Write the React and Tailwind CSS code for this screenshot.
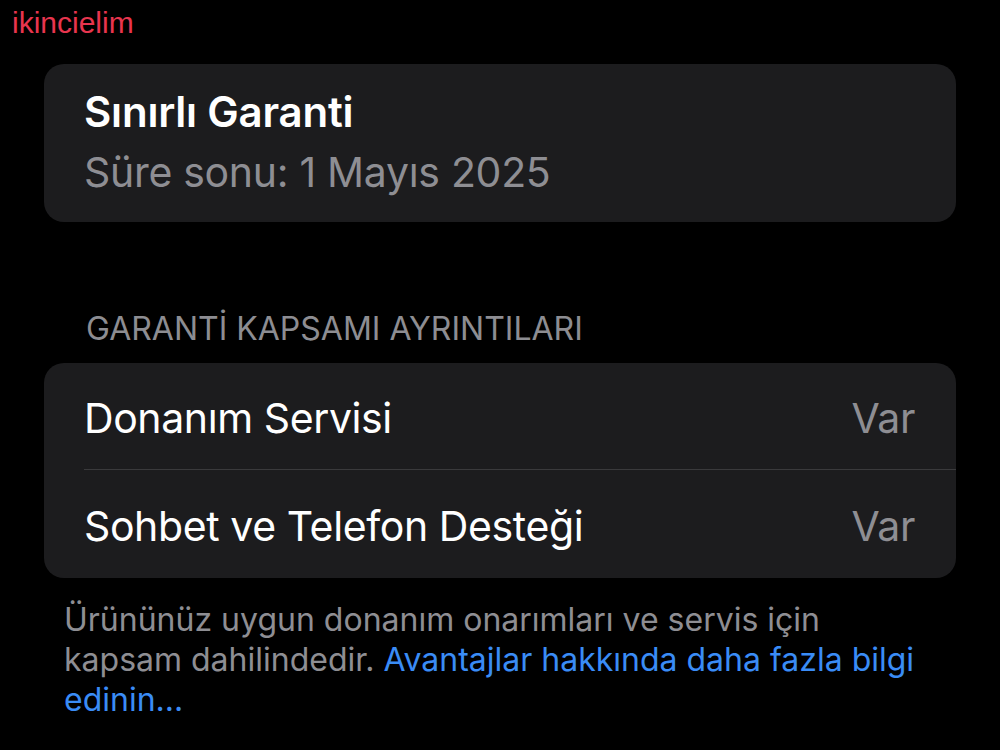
export default function App() {
  return (
    <div className="w-[1000px] h-[750px] overflow-hidden bg-black font-['Inter',sans-serif]">
      <div className="pl-[12px] pt-[8px] h-[64px] text-[30px] leading-[30px] text-[#e8354e] font-['Liberation_Sans',sans-serif]">
        ikincielim
      </div>
      <div className="mx-[44px] h-[158px] rounded-[20px] bg-[#1c1c1e] pl-[40px] pt-[18px]">
        <div className="text-[42px] leading-[60px] font-semibold text-white tracking-[-0.2px]">
          Sınırlı Garanti
        </div>
        <div className="text-[41px] leading-[60px] text-[#8e8e93] tracking-[-0.3px]">
          Süre sonu: 1 Mayıs 2025
        </div>
      </div>
      <div className="pl-[86px] pt-[87px] h-[141px] text-[32px] leading-[40px] text-[#8d8d92]">
        GARANTİ KAPSAMI AYRINTILARI
      </div>
      <div className="mx-[44px] rounded-[20px] bg-[#1c1c1e] pl-[40px]">
        <div className="flex items-center justify-between h-[107px] pt-[6px] pr-[41px] border-b border-[#3a3a3c]">
          <span className="text-[41px] text-white tracking-[-0.4px]">Donanım Servisi</span>
          <span className="text-[41px] text-[#8e8e93] tracking-[-0.4px]">Var</span>
        </div>
        <div className="flex items-center justify-between h-[108px] pt-[6px] pr-[41px]">
          <span className="text-[41px] text-white tracking-[-0.4px]">Sohbet ve Telefon Desteği</span>
          <span className="text-[41px] text-[#8e8e93] tracking-[-0.4px]">Var</span>
        </div>
      </div>
      <div className="pl-[64px] pr-[75px] pt-[22px] text-[32px] leading-[40px] text-[#8e8e93]">
        Ürününüz uygun donanım onarımları ve servis için kapsam dahilindedir.{" "}
        <span className="text-[#3a8cf6]">Avantajlar hakkında daha fazla bilgi edinin...</span>
      </div>
    </div>
  );
}
